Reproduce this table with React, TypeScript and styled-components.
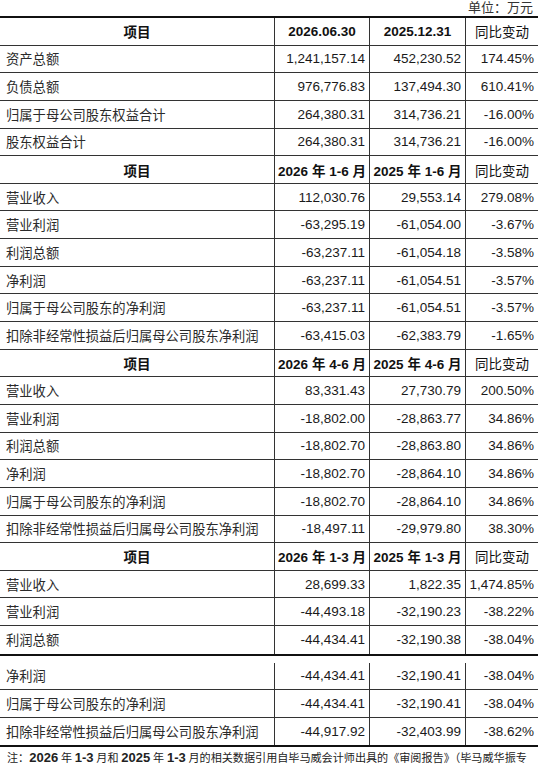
import * as React from "react";
import styled, { createGlobalStyle } from "styled-components";

const GlobalStyle = createGlobalStyle`
  body {
    margin: 0;
    background: #fff;
    color: #1a1a1a;
    font-family: "Liberation Sans", "Noto Sans CJK SC", sans-serif;
  }
`;

const Page = styled.div`
  width: 550px;
  height: 767px;
  overflow: hidden;
`;

const Unit = styled.div`
  width: 538px;
  height: 16px;
  line-height: 16px;
  text-align: right;
  padding-right: 5px;
  box-sizing: border-box;
  font-size: 13px;
  font-family: "Liberation Serif", "Noto Sans CJK SC", serif;
  color: #333;
`;

const Part = styled.div<{ $top?: boolean }>`
  width: 538px;
  border-top: ${(p) => (p.$top ? "2px solid #111" : "none")};
  border-bottom: 2px solid #111;
`;

const Gap = styled.div`
  height: 7px;
`;

const Row = styled.div<{ $h?: number }>`
  display: grid;
  grid-template-columns: 274px 95px 96px 73px;
  height: ${(p) => p.$h ?? 27.65}px;
  box-sizing: border-box;
  border-bottom: 1px solid #333;
  &:last-child {
    border-bottom: none;
  }
`;

const Cell = styled.div<{ $align?: "left" | "right" | "center" }>`
  display: flex;
  align-items: center;
  justify-content: ${(p) =>
    p.$align === "left" ? "flex-start" : p.$align === "center" ? "center" : "flex-end"};
  padding: 0 4px 0 6px;
  font-size: 13.5px;
  white-space: nowrap;
  & + & {
    border-left: 1px solid #333;
  }
`;

const Label = styled(Cell)`
  font-family: "Liberation Serif", "Noto Sans CJK SC", serif;
  font-size: 13.3px;
  color: #2a2a2a;
`;

const Head = styled(Cell)<{ $bold?: boolean }>`
  justify-content: center;
  padding: 0;
  font-weight: ${(p) => (p.$bold ? 700 : 400)};
  color: #111;
`;

const Note = styled.div`
  padding: 3px 0 0 7px;
  font-size: 11.1px;
  line-height: 16px;
  white-space: nowrap;
  overflow: hidden;
  color: #222;
  font-family: "Liberation Serif", "Noto Sans CJK SC", serif;
`;

const NoteNum = styled.b`
  font-family: "Liberation Sans", sans-serif;
  font-size: 13px;
  font-weight: 700;
`;

type Line = [string, string, string, string];

const balance: Line[] = [
  ["资产总额", "1,241,157.14", "452,230.52", "174.45%"],
  ["负债总额", "976,776.83", "137,494.30", "610.41%"],
  ["归属于母公司股东权益合计", "264,380.31", "314,736.21", "-16.00%"],
  ["股东权益合计", "264,380.31", "314,736.21", "-16.00%"],
];

const half: Line[] = [
  ["营业收入", "112,030.76", "29,553.14", "279.08%"],
  ["营业利润", "-63,295.19", "-61,054.00", "-3.67%"],
  ["利润总额", "-63,237.11", "-61,054.18", "-3.58%"],
  ["净利润", "-63,237.11", "-61,054.51", "-3.57%"],
  ["归属于母公司股东的净利润", "-63,237.11", "-61,054.51", "-3.57%"],
  ["扣除非经常性损益后归属母公司股东净利润", "-63,415.03", "-62,383.79", "-1.65%"],
];

const quarter2: Line[] = [
  ["营业收入", "83,331.43", "27,730.79", "200.50%"],
  ["营业利润", "-18,802.00", "-28,863.77", "34.86%"],
  ["利润总额", "-18,802.70", "-28,863.80", "34.86%"],
  ["净利润", "-18,802.70", "-28,864.10", "34.86%"],
  ["归属于母公司股东的净利润", "-18,802.70", "-28,864.10", "34.86%"],
  ["扣除非经常性损益后归属母公司股东净利润", "-18,497.11", "-29,979.80", "38.30%"],
];

const quarter1a: Line[] = [
  ["营业收入", "28,699.33", "1,822.35", "1,474.85%"],
  ["营业利润", "-44,493.18", "-32,190.23", "-38.22%"],
  ["利润总额", "-44,434.41", "-32,190.38", "-38.04%"],
];

const quarter1b: Line[] = [
  ["净利润", "-44,434.41", "-32,190.41", "-38.04%"],
  ["归属于母公司股东的净利润", "-44,434.41", "-32,190.41", "-38.04%"],
  ["扣除非经常性损益后归属母公司股东净利润", "-44,917.92", "-32,403.99", "-38.62%"],
];

const HeaderRow = ({ a, b }: { a: string; b: string }) => (
  <Row>
    <Head $bold>项目</Head>
    <Head $bold>{a}</Head>
    <Head $bold>{b}</Head>
    <Head>同比变动</Head>
  </Row>
);

const DataRows = ({ rows, h }: { rows: Line[]; h?: number }) => (
  <>
    {rows.map((r, i) => (
      <Row key={i} $h={h}>
        <Label $align="left">{r[0]}</Label>
        <Cell>{r[1]}</Cell>
        <Cell>{r[2]}</Cell>
        <Cell>{r[3]}</Cell>
      </Row>
    ))}
  </>
);

const App = () => (
  <Page>
    <GlobalStyle />
    <Unit>单位：万元</Unit>
    <Part $top>
      <HeaderRow a="2026.06.30" b="2025.12.31" />
      <DataRows rows={balance} />
      <HeaderRow a="2026 年 1-6 月" b="2025 年 1-6 月" />
      <DataRows rows={half} />
      <HeaderRow a="2026 年 4-6 月" b="2025 年 4-6 月" />
      <DataRows rows={quarter2} />
      <HeaderRow a="2026 年 1-3 月" b="2025 年 1-3 月" />
      <DataRows rows={quarter1a} />
    </Part>
    <Gap />
    <Part>
      <DataRows rows={quarter1b} h={27.4} />
    </Part>
    <Note>
      注：<NoteNum>2026</NoteNum> 年 <NoteNum>1-3</NoteNum> 月和 <NoteNum>2025</NoteNum> 年{" "}
      <NoteNum>1-3</NoteNum> 月的相关数据引用自毕马威会计师出具的《审阅报告》（毕马威华振专
    </Note>
  </Page>
);

export default App;
